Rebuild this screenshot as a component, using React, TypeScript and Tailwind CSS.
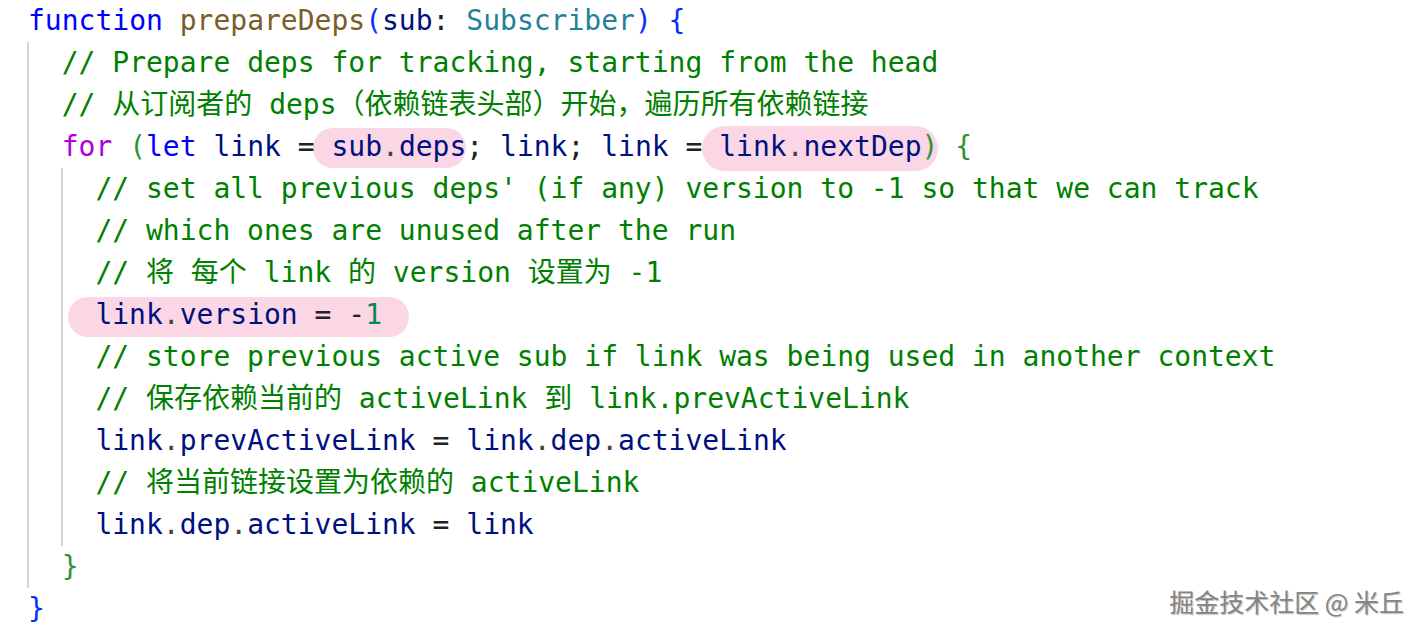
const C = {
  kw: "text-[#0000ff]",
  fn: "text-[#795e26]",
  br1: "text-[#0431fa]",
  br2: "text-[#319331]",
  ctl: "text-[#af00db]",
  v: "text-[#001080]",
  ty: "text-[#267f99]",
  cm: "text-[#008000]",
  num: "text-[#098658]",
  p: "text-[#222222]",
  dot: "text-[#444444]",
};

const Line = ({ children }: { children?: React.ReactNode }) => (
  <div className="h-[42px] whitespace-pre">{children}</div>
);

const Mark = ({
  children,
  left,
  right,
  top,
  bottom,
}: {
  children: React.ReactNode;
  left: string;
  right: string;
  top: string;
  bottom: string;
}) => (
  <span className="relative">
    <span
      className={`absolute -z-10 rounded-full bg-[#fbd6e4] ${left} ${right} ${top} ${bottom}`}
    />
    {children}
  </span>
);

const Dot = () => <span className={C.dot}>.</span>;

export default function App() {
  return (
    <div className="relative isolate h-[634px] w-[1424px] overflow-hidden bg-white">
      <div
        className="pl-[28px] text-[28px] leading-[42px]"
        style={{ fontFamily: '"DejaVu Sans Mono", "Noto Sans CJK SC", monospace' }}
      >
        <Line>
          <span className={C.kw}>function</span> <span className={C.fn}>prepareDeps</span>
          <span className={C.br1}>(</span>
          <span className={C.v}>sub</span>
          <span className={C.p}>:</span> <span className={C.ty}>Subscriber</span>
          <span className={C.br1}>)</span> <span className={C.br1}>{"{"}</span>
        </Line>
        <div className="-ml-[1px] border-l-2 border-[#d6d6d6] pl-[calc(2ch-1px)]">
          <Line>
            <span className={C.cm}>// Prepare deps for tracking, starting from the head</span>
          </Line>
          <Line>
            <span className={C.cm}>// 从订阅者的 deps（依赖链表头部）开始，遍历所有依赖链接</span>
          </Line>
          <Line>
            <span className={C.ctl}>for</span> <span className={C.br2}>(</span>
            <span className={C.kw}>let</span> <span className={C.v}>link</span>{" "}
            <span className={C.p}>=</span>{" "}
            <Mark left="-left-[18px]" right="right-0" top="-top-[2px]" bottom="-bottom-[5px]">
              <span className={C.v}>sub</span>
              <Dot />
              <span className={C.v}>deps</span>
            </Mark>
            <span className={C.p}>;</span> <span className={C.v}>link</span>
            <span className={C.p}>;</span> <span className={C.v}>link</span>{" "}
            <span className={C.p}>=</span>{" "}
            <Mark left="-left-[17px]" right="-right-[0px]" top="-top-[4px]" bottom="-bottom-[8px]">
              <span className={C.v}>link</span>
              <Dot />
              <span className={C.v}>nextDep</span>
              <span className={C.br2}>)</span>
            </Mark>{" "}
            <span className={C.br2}>{"{"}</span>
          </Line>
          <div className="-ml-[1px] border-l-2 border-[#d6d6d6] pl-[calc(2ch-1px)]">
            <Line>
              <span className={C.cm}>
                // set all previous deps' (if any) version to -1 so that we can track
              </span>
            </Line>
            <Line>
              <span className={C.cm}>// which ones are unused after the run</span>
            </Line>
            <Line>
              <span className={C.cm}>// 将 每个 link 的 version 设置为 -1</span>
            </Line>
            <Line>
              <Mark left="-left-[27px]" right="-right-[27px]" top="-top-[1px]" bottom="-bottom-[6px]">
                <span className={C.v}>link</span>
                <Dot />
                <span className={C.v}>version</span> <span className={C.p}>=</span>{" "}
                <span className={C.p}>-</span>
                <span className={C.num}>1</span>
              </Mark>
            </Line>
            <Line>
              <span className={C.cm}>
                // store previous active sub if link was being used in another context
              </span>
            </Line>
            <Line>
              <span className={C.cm}>// 保存依赖当前的 activeLink 到 link.prevActiveLink</span>
            </Line>
            <Line>
              <span className={C.v}>link</span>
              <Dot />
              <span className={C.v}>prevActiveLink</span> <span className={C.p}>=</span>{" "}
              <span className={C.v}>link</span>
              <Dot />
              <span className={C.v}>dep</span>
              <Dot />
              <span className={C.v}>activeLink</span>
            </Line>
            <Line>
              <span className={C.cm}>// 将当前链接设置为依赖的 activeLink</span>
            </Line>
            <Line>
              <span className={C.v}>link</span>
              <Dot />
              <span className={C.v}>dep</span>
              <Dot />
              <span className={C.v}>activeLink</span> <span className={C.p}>=</span>{" "}
              <span className={C.v}>link</span>
            </Line>
          </div>
          <Line>
            <span className={C.br2}>{"}"}</span>
          </Line>
        </div>
        <Line>
          <span className={C.br1}>{"}"}</span>
        </Line>
      </div>

      {/* watermark */}
      <div
        className="absolute bottom-[16px] right-[20px] text-[25px] leading-[34px] text-[#858585] [text-shadow:1px_1px_1px_rgba(0,0,0,0.25)]"
        style={{ fontFamily: '"Noto Sans CJK SC", "Noto Sans", sans-serif' }}
      >
        掘金技术社区 @ 米丘
      </div>
    </div>
  );
}
